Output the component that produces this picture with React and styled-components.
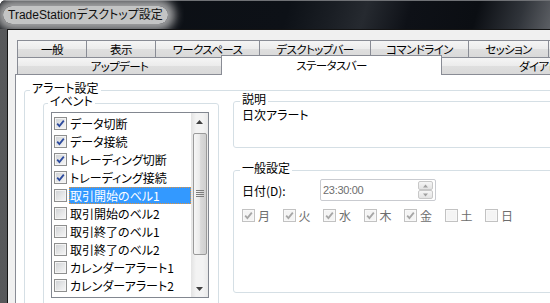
import React from "react";
import styled, { createGlobalStyle } from "styled-components";

const GlobalStyle = createGlobalStyle`
  html, body {
    margin: 0;
    padding: 0;
    background: #ffffff;
  }
  body {
    font-family: "Noto Sans CJK JP", "Liberation Sans", sans-serif;
  }
`;

const Window = styled.div`
  width: 550px;
  height: 303px;
  overflow: hidden;
  display: flex;
  flex-direction: column;
  border-top-left-radius: 6px;
  background: #0c0f14;
  font-family: "Noto Sans CJK JP", "Liberation Sans", sans-serif;
  font-size: 12px;
  font-feature-settings: "palt";
  color: #000;
`;

const TitleBar = styled.div`
  height: 29px;
  flex: none;
  box-sizing: border-box;
  display: flex;
  align-items: center;
  padding-left: 8px;
  border-top: 1px solid #6f7175;
  background: linear-gradient(
    106deg,
    #0b0e13 0%,
    #0d1117 52%,
    #1a1e24 60%,
    #262a30 66%,
    #0e1117 74%,
    #0b0e13 86%,
    #30343a 94%,
    #5c5f64 100%
  );
`;

const TitleText = styled.span`
  font-family: "Liberation Sans", "Noto Sans CJK JP", sans-serif;
  font-size: 12px;
  line-height: 14px;
  color: #101010;
  padding: 2px 5px;
  margin-left: -5px;
  border-radius: 10px;
  background: rgba(212, 212, 212, 0.92);
  box-shadow: 0 0 10px 7px rgba(200, 200, 200, 0.8);
`;

const Frame = styled.div`
  flex: 1;
  display: flex;
  min-height: 0;
  padding-left: 7px;
  background: linear-gradient(90deg, #58595b, #363739 60%, #68696b);
`;

const Client = styled.div`
  flex: 1;
  min-width: 0;
  overflow: hidden;
  background: #f0f0f0;
  border-left: 1px solid #141414;
  border-top: 1px solid #141414;
  padding: 10px 0 0 7px;
  display: flex;
  flex-direction: column;
`;

const Tabs = styled.div`
  padding-left: 2px;
  flex: none;
`;

const TabRow = styled.div`
  display: flex;
  height: 18px;
  margin-top: ${(p) => (p.$second ? "-1px" : "0")};
`;

const Tab = styled.div`
  flex: none;
  box-sizing: border-box;
  width: ${(p) => p.$w}px;
  height: ${(p) => (p.$active ? "20px" : "18px")};
  margin-top: ${(p) => (p.$active ? "-2px" : "0")};
  margin-right: -1px;
  border: 1px solid #898c95;
  border-bottom: ${(p) => (p.$active ? "none" : "1px solid #898c95")};
  background: ${(p) =>
    p.$active
      ? "#ffffff"
      : "linear-gradient(#f5f5f5 0%, #ececec 48%, #dfdfdf 52%, #d9d9d9 100%)"};
  position: relative;
  z-index: ${(p) => (p.$active ? 1 : 0)};
  display: flex;
  align-items: center;
  justify-content: center;
  padding-bottom: ${(p) => (p.$active ? "2px" : "0")};
  font-size: 11.5px;
  letter-spacing: -0.6px;
  line-height: 14px;
  white-space: nowrap;
  overflow: hidden;
`;

const Panel = styled.div`
  flex: 1;
  width: 620px;
  margin-top: -1px;
  box-sizing: border-box;
  background: #ffffff;
  border: 1px solid #898c95;
  padding: 15px 0 0 8px;
`;

const GroupBox = styled.div`
  box-sizing: border-box;
  border: 1px solid #d5dfe5;
  border-radius: 3px;
  width: ${(p) => (p.$w ? `${p.$w}px` : "auto")};
  height: ${(p) => p.$h}px;
  margin-top: ${(p) => p.$top || 0}px;
  flex: none;
`;

const Caption = styled.div`
  width: fit-content;
  margin: -9px 0 0 ${(p) => p.$x}px;
  padding: 0 2px;
  height: 12px;
  line-height: 12px;
  background: #ffffff;
  white-space: nowrap;
`;

const GroupBody = styled.div`
  display: flex;
  gap: 14px;
  padding-left: 18px;
`;

const ListBox = styled.div`
  box-sizing: border-box;
  width: 158px;
  height: 186px;
  margin: 5px 0 0 7px;
  border: 1px solid #828790;
  display: flex;
  overflow: hidden;
`;

const Items = styled.div`
  flex: 1;
  padding-top: 1px;
  min-width: 0;
`;

const Row = styled.div`
  height: 18px;
  display: flex;
  align-items: center;
  padding-left: 2px;
`;

const Box = styled.span`
  flex: none;
  box-sizing: border-box;
  width: 13px;
  height: 13px;
  border: 1px solid ${(p) => (p.$disabled ? "#c2c2c2" : "#8e8f8f")};
  background: ${(p) =>
    p.$disabled
      ? "#f4f4f4"
      : "linear-gradient(135deg, #cdd0d4 0%, #e6e7e8 55%, #f7f7f7 100%)"};
  box-shadow: inset 0 0 0 1px ${(p) => (p.$disabled ? "#f8f8f8" : "#f4f4f4")};
  display: flex;
  align-items: center;
  justify-content: center;
`;

const ItemLabel = styled.span`
  flex: 1;
  box-sizing: border-box;
  margin-left: 2px;
  height: 17px;
  line-height: 15px;
  white-space: nowrap;
  border: 1px dotted ${(p) => (p.$selected ? "#e1913a" : "transparent")};
  background: ${(p) => (p.$selected ? "#3399ff" : "transparent")};
  color: ${(p) => (p.$selected ? "#ffffff" : "#000000")};
`;

const ScrollBar = styled.div`
  flex: none;
  width: 17px;
  display: flex;
  flex-direction: column;
  background: linear-gradient(90deg, #e3e3e3, #f3f3f3 30%, #f3f3f3 70%, #e9e9e9);
`;

const ArrowButton = styled.div`
  height: 17px;
  flex: none;
  display: flex;
  align-items: center;
  justify-content: center;
`;

const Thumb = styled.div`
  box-sizing: border-box;
  height: 122px;
  margin: 3px 1px 0 2px;
  border: 1px solid #9a9a9a;
  border-radius: 2px;
  background: linear-gradient(90deg, #f6f6f6 0%, #ebebeb 45%, #d9d9d9 55%, #cfcfcf 100%);
  display: flex;
  align-items: center;
  justify-content: center;
`;

const Spacer = styled.div`
  flex: 1;
`;

const RightColumn = styled.div`
  flex: none;
  width: 400px;
  display: flex;
  flex-direction: column;
`;

const Description = styled.div`
  margin: 3px 0 0 8px;
  line-height: 14px;
`;

const DateRow = styled.div`
  display: flex;
  align-items: center;
  height: 22px;
  margin-top: 5px;
  padding-left: 8px;
`;

const FieldLabel = styled.span`
  width: 78px;
  flex: none;
`;

const TimeBox = styled.div`
  box-sizing: border-box;
  width: 116px;
  height: 22px;
  border: 1px solid #c9cbd0;
  border-radius: 2px;
  display: flex;
  align-items: center;
  justify-content: space-between;
  padding: 0 2px;
  color: #6d6d6d;
  font-family: "Liberation Sans", sans-serif;
  font-size: 11px;
  letter-spacing: -0.3px;
`;

const Spinner = styled.div`
  display: flex;
  flex-direction: column;
  width: 15px;
`;

const SpinButton = styled.div`
  box-sizing: border-box;
  height: 9px;
  border: 1px solid #c8c8c8;
  border-radius: 2px;
  background: linear-gradient(#f6f6f6, #e3e3e3);
  display: flex;
  align-items: center;
  justify-content: center;
`;

const DayRow = styled.div`
  display: flex;
  align-items: center;
  height: 13px;
  margin-top: 8px;
  padding-left: 8px;
`;

const Day = styled.div`
  width: 40.5px;
  flex: none;
  display: flex;
  align-items: center;
`;

const DayLabel = styled.span`
  margin-left: 3px;
  color: #6d6d6d;
  line-height: 13px;
`;

const Check = ({ color }) => (
  <svg width="9" height="9" viewBox="0 0 9 9">
    <path d="M1.2 4.6 L3.4 7 L7.8 1.6" fill="none" stroke={color} strokeWidth="1.8" />
  </svg>
);

const Arrow = ({ up, color = "#404040", w = 7 }) => (
  <svg width={w} height="4" viewBox="0 0 7 4">
    <path d={up ? "M0 4 L3.5 0 L7 4 Z" : "M0 0 L3.5 4 L7 0 Z"} fill={color} />
  </svg>
);

const Grip = () => (
  <svg width="8" height="8" viewBox="0 0 8 8">
    {[0.5, 2.5, 4.5, 6.5].map((y) => (
      <line key={y} x1="0" y1={y} x2="8" y2={y} stroke="#7d7d7d" strokeWidth="1" />
    ))}
  </svg>
);

const row1 = [
  ["一般", 70],
  ["表示", 70],
  ["ワークスペース", 105],
  ["デスクトップバー", 112],
  ["コマンドライン", 99],
  ["セッション", 81],
  ["チャート", 90],
];

const row2 = [
  ["アップデート", 205],
  ["ステータスバー", 221, true],
  ["ダイアログ", 206],
];

const events = [
  ["データ切断", true],
  ["データ接続", true],
  ["トレーディング切断", true],
  ["トレーディング接続", true],
  ["取引開始のベル1", false, true],
  ["取引開始のベル2", false],
  ["取引終了のベル1", false],
  ["取引終了のベル2", false],
  ["カレンダーアラート1", false],
  ["カレンダーアラート2", false],
  ["カレンダーアラート3", false],
];

const days = [
  ["月", true],
  ["火", true],
  ["水", true],
  ["木", true],
  ["金", true],
  ["土", false],
  ["日", false],
];

export default function App() {
  return (
    <>
      <GlobalStyle />
      <Window>
        <TitleBar>
          <TitleText>TradeStationデスクトップ設定</TitleText>
        </TitleBar>
        <Frame>
          <Client>
            <Tabs>
              <TabRow>
                {row1.map(([label, w]) => (
                  <Tab key={label} $w={w}>
                    {label}
                  </Tab>
                ))}
              </TabRow>
              <TabRow $second>
                {row2.map(([label, w, active]) => (
                  <Tab key={label} $w={w} $active={active}>
                    {label}
                  </Tab>
                ))}
              </TabRow>
            </Tabs>
            <Panel>
              <GroupBox $w={600} $h={260}>
                <Caption $x={5}>アラート設定</Caption>
                <GroupBody>
                  <GroupBox $w={176} $h={220} $top={9}>
                    <Caption $x={4}>イベント</Caption>
                    <ListBox>
                      <Items>
                        {events.map(([label, checked, selected]) => (
                          <Row key={label}>
                            <Box>{checked && <Check color="#2c4a9e" />}</Box>
                            <ItemLabel $selected={selected}>{label}</ItemLabel>
                          </Row>
                        ))}
                      </Items>
                      <ScrollBar>
                        <ArrowButton>
                          <Arrow up />
                        </ArrowButton>
                        <Thumb>
                          <Grip />
                        </Thumb>
                        <Spacer />
                        <ArrowButton>
                          <Arrow />
                        </ArrowButton>
                      </ScrollBar>
                    </ListBox>
                  </GroupBox>
                  <RightColumn>
                    <GroupBox $h={47} $top={7}>
                      <Caption $x={6}>説明</Caption>
                      <Description>日次アラート</Description>
                    </GroupBox>
                    <GroupBox $h={123} $top={22}>
                      <Caption $x={6}>一般設定</Caption>
                      <DateRow>
                        <FieldLabel>日付(D):</FieldLabel>
                        <TimeBox>
                          <span>23:30:00</span>
                          <Spinner>
                            <SpinButton>
                              <Arrow up color="#a0a0a0" w={5} />
                            </SpinButton>
                            <SpinButton>
                              <Arrow color="#a0a0a0" w={5} />
                            </SpinButton>
                          </Spinner>
                        </TimeBox>
                      </DateRow>
                      <DayRow>
                        {days.map(([label, checked]) => (
                          <Day key={label}>
                            <Box $disabled>{checked && <Check color="#a6a6a6" />}</Box>
                            <DayLabel>{label}</DayLabel>
                          </Day>
                        ))}
                      </DayRow>
                    </GroupBox>
                  </RightColumn>
                </GroupBody>
              </GroupBox>
            </Panel>
          </Client>
        </Frame>
      </Window>
    </>
  );
}
